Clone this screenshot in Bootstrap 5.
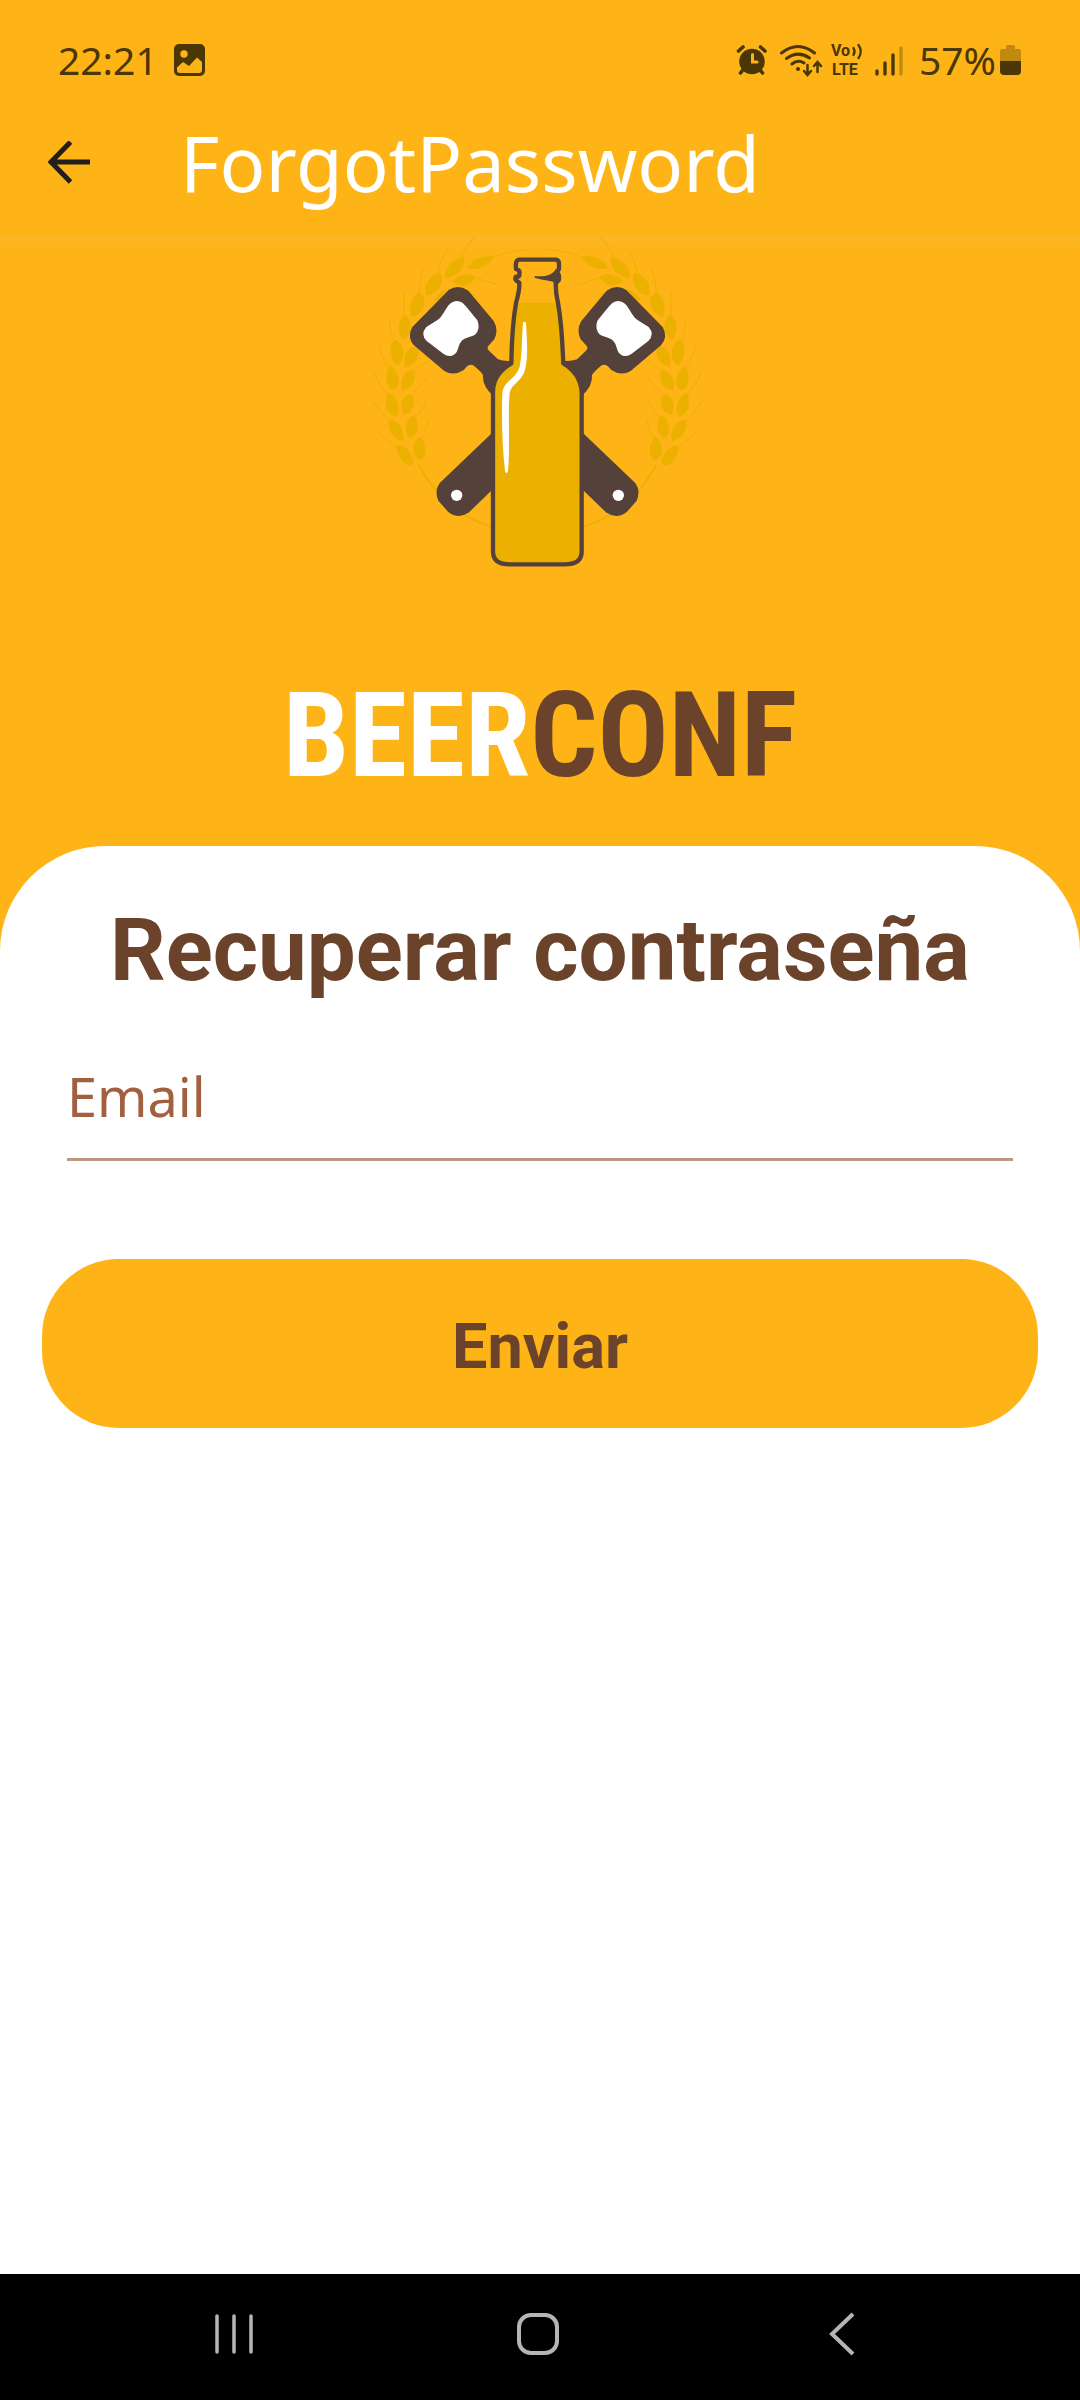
<!DOCTYPE html>
<html lang="es">
<head>
<meta charset="utf-8">
<meta name="viewport" content="width=device-width, initial-scale=1">
<title>ForgotPassword</title>
<link href="https://cdn.jsdelivr.net/npm/bootstrap@5.3.0/dist/css/bootstrap.min.css" rel="stylesheet">
<style>
  :root { --beer: #feb416; --brown: #6b432b; --ink: #4b3606; }
  body { font-family: "Noto Sans", sans-serif; background: var(--beer); }
  svg { display: block; flex: none; }
  .statusbar { height: 120px; padding: 0 58px; color: var(--ink); font-size: 39px; line-height: 52px; }
  .appbar { height: 116px; padding: 2px 48px 32px; gap: 89px; }
  .appbar h1 { font-size: 76px; line-height: 84px; font-weight: 400; }
  .hero { background: linear-gradient(#fbb528, var(--beer) 14px); padding-bottom: 50px; }
  .brand { font-family: "Roboto Condensed", "Liberation Sans Narrow", Roboto, sans-serif; font-weight: 700; font-size: 118px; line-height: 120px; margin-top: 96px; color: #fff; }
  .brand span { color: var(--brown); }
  .sheet { border-radius: 105px 105px 0 0; padding: 52px 42px; }
  .sheet h2 { font-family: Roboto, sans-serif; font-weight: 700; font-size: 87px; line-height: 104px; color: var(--brown); }
  .field { margin: 30px 25px 98px; }
  .field .form-control { height: 129px; padding: 2px 0 0; border: 0; border-bottom: 3px solid #bd9585; border-radius: 0; font-size: 54px; background: none; box-shadow: none; color: var(--brown); }
  .field .form-control::placeholder { color: #a1603f; opacity: 1; }
  .send { font-family: Roboto, sans-serif; font-weight: 700; font-size: 63px; line-height: 75px; padding: 50px 0 44px; border: 0; border-radius: 77px; background: var(--beer); color: var(--brown); }
  .send:hover { background: #f0a50c; color: var(--brown); }
  .softkeys { height: 126px; padding: 0 216px 6px 212px; }
</style>
<script src="https://cdn.jsdelivr.net/npm/bootstrap@5.3.0/dist/js/bootstrap.bundle.min.js" defer></script>
</head>
<body class="min-vh-100 d-flex flex-column">

<div class="statusbar d-flex align-items-center justify-content-between">
  <div class="d-flex align-items-center">
    <span>22:21</span>
    <svg class="ms-3" width="32" height="32" viewBox="0 0 32 32"><rect width="31" height="32" rx="5" fill="#4b3606"/><circle cx="10" cy="10" r="3.7" fill="#feb416"/><path d="M3 23.500L9 18L15 22L23 13.500L28 18V26Q28 29 25 29H6Q3 29 3 26Z" fill="#feb416"/></svg>
  </div>
  <div class="d-flex align-items-center">
    <svg width="184" height="38" viewBox="0 -2 184 38" fill="none" stroke="#4b3606" stroke-linecap="round">
      <circle cx="17" cy="18.500" r="12.800" fill="#4b3606" stroke="none"/>
      <path d="M3.500 8L8 4M25.500 4L30 8" stroke-width="3.600"/><path d="M7 28L5.500 30M26 28L27.500 30" stroke-width="3.600"/>
      <path d="M17.500 11.500V19H22" stroke="#feb416" stroke-width="3"/>
      <path d="M46.500 10Q63 -3 79.500 10M51.500 15.500Q63 7 74.500 15M57 21Q63 16 69 20" stroke-width="3"/>
      <circle cx="63" cy="26" r="2.100" fill="#4b3606" stroke="none"/>
      <path d="M72.500 22V32M69 28L72.500 32L76 28M82.500 29V19M79 23L82.500 19L86 23" stroke-width="2.500"/>
      <g fill="#4b3606" stroke="none" font-family="Roboto, sans-serif" font-weight="700" font-size="16"><text x="96" y="13">Vo</text><text x="97" y="32">LTE</text></g>
      <path d="M118.500 5Q120.500 8.500 118.500 12M123.500 2Q128 8.500 123.500 15" stroke-width="2.300"/>
      <path d="M142 28V31M150 20V31M158 12V31" stroke-width="3.400"/><path d="M166 5V31" stroke="#c08a10" stroke-width="3.400"/>
    </svg>
    <span>57%</span>
    <svg class="ms-1" width="22" height="30" viewBox="0 0 22 30"><path d="M6 4V1.500Q6 0 7.500 0H13.500Q15 0 15 1.500V4H19Q21 4 21 6V16H0V6Q0 4 2 4Z" fill="#c08a10"/><path d="M0 16H21V26Q21 30 17 30H4Q0 30 0 26Z" fill="#4b3606"/></svg>
  </div>
</div>

<header class="appbar d-flex align-items-center">
  <a href="#" aria-label="Volver">
    <svg width="43" height="44" viewBox="0 0 43 44" fill="none" stroke="#211e1b" stroke-width="5"><path d="M42 21H4M22.500 1L3 21L22.500 41"/></svg>
  </a>
  <h1 class="m-0 text-white">ForgotPassword</h1>
</header>

<section class="hero d-flex flex-column align-items-center">
  <svg width="360" height="344" viewBox="0 48 1080 1032" role="img" aria-label="Beerconf">
    <defs>
      <g id="side">
        <g fill="#ecb000">
          <path d="M320 145C340 112 375 104 404 110C382 140 350 153 320 145Z"/>
          <path d="M256 174C250 140 285 115 312 111C316 145 290 172 256 174Z"/>
          <path d="M276 184C300 160 325 156 347 172C325 204 300 204 276 184Z"/>
          <path d="M200 226C188 194 210 165 240 158C258 182 235 222 200 226Z"/>
          <path d="M222 242C235 215 260 205 285 206L250 242Z"/>
          <path d="M156 290C144 262 155 225 179 218C206 233 194 283 156 290Z"/>
          <path d="M128 360C108 335 114 292 135 286C160 302 158 348 128 360Z"/>
          <path d="M136 440C126 405 145 375 175 378C182 408 165 438 136 440Z"/>
          <path d="M112 436C84 415 88 368 106 359C132 367 140 418 112 436Z"/>
          <path d="M96 511C73 490 76 448 90 438C117 452 130 504 96 511Z"/>
          <path d="M126 511C117 475 135 450 162 449C170 482 157 507 126 511Z"/>
          <path d="M106 589C74 578 72 535 84 518C112 524 126 580 106 589Z"/>
          <path d="M130 583C114 556 130 522 158 523C168 553 158 583 130 583Z"/>
          <path d="M128 664C95 655 82 624 86 600C112 595 139 633 128 664Z"/>
          <path d="M148 653C130 630 137 592 165 585C177 606 178 647 148 653Z"/>
          <path d="M162 728C143 749 113 721 108 678C133 669 155 697 162 728Z"/>
          <path d="M180 720C150 708 156 663 180 650C202 671 200 716 180 720Z"/>
        </g>
        <g fill="none" stroke="#ecb000" stroke-width="3">
          <path d="M404 110Q450 92 508 88M302 112Q320 76 346 46M347 173Q380 185 410 193M234 158Q240 120 262 90M176 220Q177 180 189 147M131 287Q135 245 132 212M98 362Q87 325 89 289M82 440Q61 405 58 371M79 520Q55 490 42 458M86 601Q57 572 40 544M108 681Q75 657 53 633M162 452L212 418M162 516Q182 500 201 475M168 590Q190 570 200 537M188 654Q197 625 207 597M318 224H350"/>
          <path d="M176 735Q260 885 402 922" stroke-width="5"/>
        </g>
        <path fill="#54413a" d="M267 209Q294 192 323 211L329 217L401 303Q417 330 403 358L383 380Q382 387 387 392L414 418Q430 424 450 423L460 470L400 528Q366 498 369 465Q366 458 340 436Q332 431 322 438L311 450Q281 470 253 453L162 376Q140 351 157 321Z"/>
        <path fill="#fff" d="M273 249Q290 237 307 248Q316 255 352 301Q363 327 345 344C322 355 310 352 300 370C291 390 294 400 276 407Q262 410 250 401L200 363Q180 343 199 321C216 310 229 303 240 294C256 274 261 257 273 249Z"/>
        <path fill="#54413a" d="M400 635L240 788Q222 812 235 842L264 875Q295 900 327 877L400 806Z"/>
        <circle cx="290" cy="826" r="17" fill="#fff"/>
      </g>
    </defs>
    <use href="#side"/>
    <use href="#side" transform="matrix(-1 0 0 1 1065 0)"/>
    <path d="M480 190C482 225 458 255 454 430C420 450 399 475 399 515V995Q399 1033 450 1033H613Q665 1033 665 995V515C662 475 644 450 610 430C608 255 590 225 586 190Z" fill="#feb416"/>
    <path d="M473 248H595C605 310 607 370 610 430C644 450 662 475 665 515V995Q665 1033 613 1033H450Q399 1033 399 995V515C399 475 420 450 454 430C456 360 459 300 473 248Z" fill="#ecb000"/>
    <path d="M478 119H588Q598 121 597 134V147Q594 153 590 156Q598 162 597 175Q597 184 587 188C587 210 588 225 594 249C606 315 607 370 610 430C644 450 662 475 665 515V995Q665 1033 613 1033H450Q399 1033 399 995V515C399 475 420 450 454 430C455 360 459 300 468 249C475 225 479 210 478 188Q461 179 468 170Q480 173 478 161Q481 151 468 147Q465 119 478 119Z" fill="none" stroke="#54413a" stroke-width="13" stroke-linejoin="round"/>
    <path d="M524 168C555 172 580 164 588 146L601 164V185L588 188C570 180 545 181 524 173Z" fill="#54413a"/>
    <path d="M489 308Q493 303 498 308C500 350 505 400 497 440C491 484 453 490 449 520C443 590 451 680 444 754Q440 765 435 754C427 680 424 600 427 520C431 480 466 480 479 440C487 400 485 350 489 308Z" fill="#fff"/>
  </svg>
  <div class="brand">BEER<span>CONF</span></div>
</section>

<main class="sheet bg-white flex-grow-1">
  <h2 class="text-center m-0">Recuperar contraseña</h2>
  <form>
    <div class="field">
      <input class="form-control" type="email" id="email" aria-label="Email" placeholder="Email">
    </div>
    <button class="btn send w-100" type="submit">Enviar</button>
  </form>
</main>

<nav class="softkeys bg-black d-flex align-items-center justify-content-between">
  <button class="btn p-0 border-0" type="button" aria-label="Recientes"><svg width="44" height="44" viewBox="0 0 44 44" stroke="#b5b5b5" stroke-width="3.500" stroke-linecap="round"><path d="M5 4V40M22 4V40M39 4V40"/></svg></button>
  <button class="btn p-0 border-0" type="button" aria-label="Inicio"><svg width="44" height="44" viewBox="0 0 44 44" fill="none" stroke="#b5b5b5" stroke-width="4"><rect x="3" y="3" width="38" height="38" rx="12"/></svg></button>
  <button class="btn p-0 border-0" type="button" aria-label="Atrás"><svg width="44" height="44" viewBox="0 0 44 44" fill="none" stroke="#b5b5b5" stroke-width="4"><path d="M33 2L12 22L33 42"/></svg></button>
</nav>
</body>
</html>
